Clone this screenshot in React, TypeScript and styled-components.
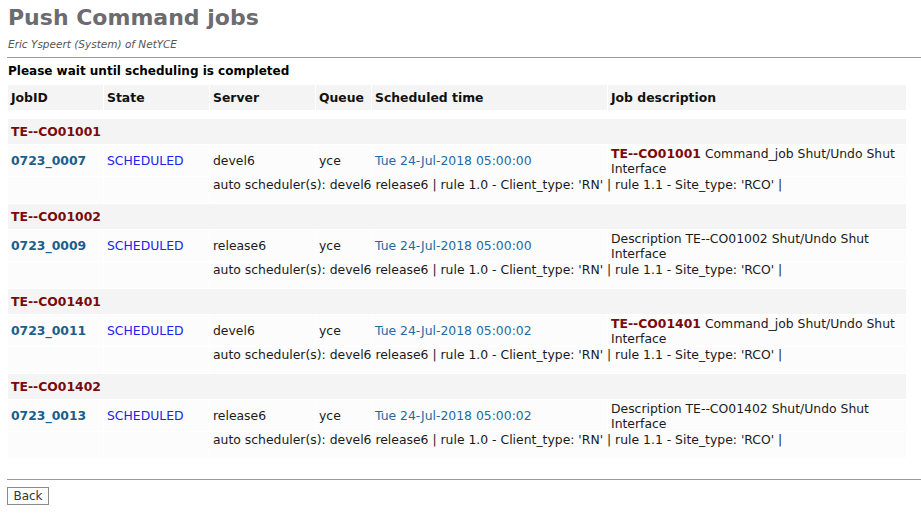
import { Fragment } from "react";
import styled, { createGlobalStyle } from "styled-components";

const GlobalStyle = createGlobalStyle`
  body {
    margin: 0;
    background: #ffffff;
    font-family: "DejaVu Sans", Verdana, sans-serif;
    font-size: 12.4px;
    color: #1a1a1a;
  }
`;

const Page = styled.div`
  padding: 4px 0 0 0;
`;

const Header = styled.div`
  padding: 0 8px;
`;

const Title = styled.h1`
  margin: 0;
  font-size: 22px;
  font-weight: bold;
  color: #6b6b70;
  line-height: 28px;
`;

const Subtitle = styled.div`
  font-size: 10.5px;
  font-style: italic;
  color: #555555;
  margin-top: 5px;
  line-height: 14px;
`;

const Rule = styled.hr<{ $top: number }>`
  border: none;
  border-top: 1px solid #9a9a9a;
  margin: ${(p) => p.$top}px 0 0 7px;
`;

const Notice = styled.div`
  padding: 0 8px;
  margin-top: 5px;
  font-size: 12px;
  font-weight: bold;
  color: #000000;
  line-height: 16px;
`;

const Table = styled.table`
  margin: 5px 0 0 7px;
  width: 898px;
  border-collapse: separate;
  border-spacing: 1px;
  table-layout: fixed;
`;

const HeadCell = styled.th`
  background: #f4f4f4;
  text-align: left;
  font-weight: bold;
  color: #111111;
  height: 25px;
  padding: 0 3px;
`;

const Spacer = styled.td`
  height: 7px;
  padding: 0;
`;

const GroupCell = styled.td`
  background: #f4f4f4;
  height: 25px;
  padding: 0 3px;
  font-weight: bold;
  color: #7a0a0a;
`;

const Cell = styled.td`
  background: #fcfcfc;
  height: 31px;
  padding: 0 3px;
  vertical-align: middle;
  line-height: 15px;
`;

const RuleCell = styled.td`
  background: #fcfcfc;
  height: 26px;
  padding: 0 3px;
  vertical-align: top;
  line-height: 15px;
`;

const JobLink = styled.span`
  font-weight: bold;
  color: #1b5e8c;
`;

const State = styled.span`
  color: #2222ee;
`;

const TimeLink = styled.span`
  color: #1f6aa5;
`;

const Code = styled.span`
  font-weight: bold;
  color: #7a0a0a;
`;

const Footer = styled.div`
  padding: 7px 0 0 7px;
`;

const BackButton = styled.button`
  font-family: "DejaVu Sans", Verdana, sans-serif;
  font-size: 12px;
  color: #333333;
  background: #ffffff;
  border: 1px solid #8a8a8a;
  border-radius: 0;
  height: 18px;
  width: 42px;
  padding: 0;
`;

type Job = {
  group: string;
  id: string;
  server: string;
  time: string;
  codeBold: boolean;
};

const jobs: Job[] = [
  { group: "TE--CO01001", id: "0723_0007", server: "devel6", time: "Tue 24-Jul-2018 05:00:00", codeBold: true },
  { group: "TE--CO01002", id: "0723_0009", server: "release6", time: "Tue 24-Jul-2018 05:00:00", codeBold: false },
  { group: "TE--CO01401", id: "0723_0011", server: "devel6", time: "Tue 24-Jul-2018 05:00:02", codeBold: true },
  { group: "TE--CO01402", id: "0723_0013", server: "release6", time: "Tue 24-Jul-2018 05:00:02", codeBold: false },
];

export default function App() {
  return (
    <Page>
      <GlobalStyle />
      <Header>
        <Title>Push Command jobs</Title>
        <Subtitle>Eric Yspeert (System) of NetYCE</Subtitle>
      </Header>
      <Rule $top={6} />
      <Notice>Please wait until scheduling is completed</Notice>
      <Table>
        <colgroup>
          <col style={{ width: 95 }} />
          <col style={{ width: 105 }} />
          <col style={{ width: 105 }} />
          <col style={{ width: 55 }} />
          <col style={{ width: 235 }} />
          <col style={{ width: 298 }} />
        </colgroup>
        <thead>
          <tr>
            <HeadCell>JobID</HeadCell>
            <HeadCell>State</HeadCell>
            <HeadCell>Server</HeadCell>
            <HeadCell>Queue</HeadCell>
            <HeadCell>Scheduled time</HeadCell>
            <HeadCell>Job description</HeadCell>
          </tr>
          <tr>
            <Spacer colSpan={6} />
          </tr>
        </thead>
        <tbody>
          {jobs.map((job) => (
            <Fragment key={job.id}>
              <tr>
                <GroupCell colSpan={6}>{job.group}</GroupCell>
              </tr>
              <tr>
                <Cell>
                  <JobLink>{job.id}</JobLink>
                </Cell>
                <Cell>
                  <State>SCHEDULED</State>
                </Cell>
                <Cell>{job.server}</Cell>
                <Cell>yce</Cell>
                <Cell>
                  <TimeLink>{job.time}</TimeLink>
                </Cell>
                <Cell>
                  {job.codeBold ? (
                    <>
                      <Code>{job.group}</Code> Command_job Shut/Undo Shut Interface
                    </>
                  ) : (
                    <>Description {job.group} Shut/Undo Shut Interface</>
                  )}
                </Cell>
              </tr>
              <tr>
                <RuleCell />
                <RuleCell />
                <RuleCell colSpan={4}>
                  auto scheduler(s): devel6 release6 | rule 1.0 - Client_type: 'RN' | rule 1.1 -
                  Site_type: 'RCO' |
                </RuleCell>
              </tr>
            </Fragment>
          ))}
        </tbody>
      </Table>
      <Rule $top={20} />
      <Footer>
        <BackButton>Back</BackButton>
      </Footer>
    </Page>
  );
}
